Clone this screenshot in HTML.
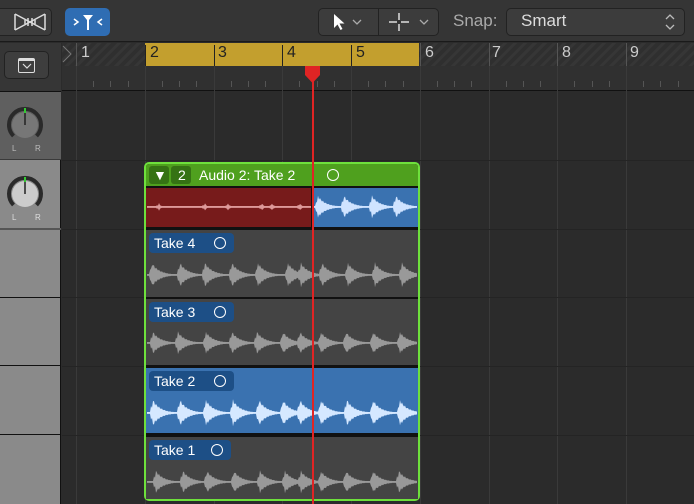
<!DOCTYPE html>
<html><head><meta charset="utf-8"><style>
*{margin:0;padding:0;box-sizing:border-box}
body{width:694px;height:504px;overflow:hidden;background:#2b2b2b;font-family:"Liberation Sans",sans-serif;position:relative}
.a{position:absolute}
.btn{position:absolute;border:1px solid #222;border-radius:5px;background:#3c3c3c}
.lab{position:absolute;left:3px;height:20px;border-radius:4px;background:#1d4f86;color:#fff;font-size:14px;line-height:20px;padding-left:5px}
.circ{position:absolute;width:12px;height:12px;border:1.6px solid #fff;border-radius:50%;top:4px}
.num{position:absolute;top:44px;font-size:16px;color:#ccc}
</style></head><body>
<div class="a" style="left:0;top:0;width:694px;height:42px;background:#353535;border-bottom:1px solid #1a1a1a"></div>
<div class="btn" style="left:-6px;top:8px;width:58px;height:28px;"></div>
<svg class="a" style="left:14px;top:12px" width="32" height="20"><path d="M1 2 L31 18 M1 18 L31 2 M1 2V18 M31 2V18" stroke="#ddd" stroke-width="1.5" fill="none"/><path d="M11 8v4M14 6v8M18 6v8M21 8v4" stroke="#ddd" stroke-width="1.5"/></svg>
<div class="a" style="left:65px;top:8px;width:45px;height:28px;border-radius:5px;background:#2f6db3"></div>
<svg class="a" style="left:72px;top:12px" width="32" height="20"><path d="M2 7l4 3-4 3M30 7l-4 3 4 3" stroke="#fff" stroke-width="1.5" fill="none"/><path d="M11 3h10l-4 5v10h-2V8z" fill="#fff"/></svg>
<div class="btn" style="left:318px;top:8px;width:121px;height:28px"></div>
<div class="a" style="left:378px;top:8px;width:1px;height:28px;background:#222"></div>
<svg class="a" style="left:330px;top:12px" width="110" height="20"><path d="M4 2v14l3.5-3.5 3 5.5 2-1-3-5.5h5z" fill="#fff"/><path d="M23 8l4 4 4-4" stroke="#aaa" stroke-width="1.3" fill="none"/><path d="M69 1v18M59 10h20" stroke="#ddd" stroke-width="1.5"/><path d="M67 8h4v4h-4z" fill="#353535"/><path d="M90 8l4 4 4-4" stroke="#aaa" stroke-width="1.3" fill="none"/></svg>
<div class="a" style="left:453px;top:11px;font-size:17px;color:#aaa">Snap:</div>
<div class="btn" style="left:506px;top:8px;width:179px;height:28px"></div>
<div class="a" style="left:521px;top:11px;font-size:17px;color:#ddd">Smart</div>
<svg class="a" style="left:664px;top:13px" width="12" height="18"><path d="M2 6l4-4 4 4M2 12l4 4 4-4" stroke="#bbb" stroke-width="1.3" fill="none"/></svg>
<div class="a" style="left:0;top:43px;width:61px;height:461px;background:#8a8a8a;border-right:1px solid #111"></div>
<div class="a" style="left:0;top:43px;width:61px;height:49px;background:#363636;border-bottom:1px solid #111"></div>
<div class="btn" style="left:4px;top:51px;width:45px;height:28px;background:#3e3e3e"></div>
<div class="a" style="left:18px;top:58px;width:17px;height:15px;border:1.5px solid #ddd;border-top-width:3px;border-radius:2px"></div>
<svg class="a" style="left:22px;top:63px" width="10" height="6"><path d="M1 1l4 4 4-4" stroke="#ddd" stroke-width="1.2" fill="none"/></svg>
<div class="a" style="left:0;top:92px;width:61px;height:68px;background:#5f5f5f;border-bottom:1px solid #3a3a3a"></div>
<div class="a" style="left:0;top:228px;width:61px;height:2px;background:#555"></div>
<div class="a" style="left:0;top:297px;width:61px;height:1px;background:#111"></div>
<div class="a" style="left:0;top:365px;width:61px;height:1px;background:#111"></div>
<div class="a" style="left:0;top:434px;width:61px;height:1px;background:#111"></div>
<svg class="a" style="left:3px;top:105px" width="44" height="50"><path d="M10.5 31 A16 16 0 1 1 33.5 31" stroke="#2a2a2a" stroke-width="4" fill="none"/><circle cx="22" cy="20" r="13" fill="#777"/><path d="M22 3v5" stroke="#3c3" stroke-width="2"/><path d="M22 8v12" stroke="#222" stroke-width="1.5"/><text x="9" y="46" font-size="8" fill="#bbb" font-family="Liberation Sans">L</text><text x="32" y="46" font-size="8" fill="#bbb" font-family="Liberation Sans">R</text></svg>
<svg class="a" style="left:3px;top:174px" width="44" height="50"><path d="M10.5 31 A16 16 0 1 1 33.5 31" stroke="#2a2a2a" stroke-width="4" fill="none"/><circle cx="22" cy="20" r="13" fill="#ccc"/><path d="M22 3v5" stroke="#3c3" stroke-width="2"/><path d="M22 8v12" stroke="#222" stroke-width="1.5"/><text x="9" y="46" font-size="8" fill="#ddd" font-family="Liberation Sans">L</text><text x="32" y="46" font-size="8" fill="#ddd" font-family="Liberation Sans">R</text></svg>
<div class="a" style="left:62px;top:43px;width:632px;height:23px;background:repeating-linear-gradient(135deg,#2f2f2f 0 4px,#363636 4px 7px)"></div>
<div class="a" style="left:145px;top:43px;width:274px;height:23px;background:#c39f2e"></div>
<div class="a" style="left:62px;top:66px;width:632px;height:25px;background:#303030;border-bottom:1px solid #111"></div>
<svg class="a" style="left:62px;top:43px" width="10" height="24"><path d="M1 3l8 8-8 8" stroke="#777" fill="none"/></svg>
<div id="ticks"></div>
<div class="num" style="left:81px">1</div><div class="num" style="left:150px;color:#222">2</div><div class="num" style="left:218px;color:#222">3</div><div class="num" style="left:287px;color:#222">4</div><div class="num" style="left:356px;color:#222">5</div><div class="num" style="left:425px">6</div><div class="num" style="left:492px">7</div><div class="num" style="left:562px">8</div><div class="num" style="left:630px">9</div>
<div class="a" style="left:62px;top:160px;width:632px;height:1px;background:#242424"></div>
<div class="a" style="left:62px;top:229px;width:632px;height:1px;background:#242424"></div>
<div class="a" style="left:62px;top:297px;width:632px;height:1px;background:#242424"></div>
<div class="a" style="left:62px;top:366px;width:632px;height:1px;background:#242424"></div>
<div class="a" style="left:62px;top:435px;width:632px;height:1px;background:#242424"></div>
<div class="a" style="left:144px;top:162px;width:276px;height:339px;border:2px solid #6ee03c;border-radius:5px;background:#111"></div>
<div class="a" style="left:146px;top:164px;width:272px;height:22px;background:#4fa01e;border-radius:3px 3px 0 0"></div>
<div class="a" style="left:149px;top:166px;width:20px;height:18px;background:#357214;border-radius:3px"></div>
<div class="a" style="left:171px;top:166px;width:20px;height:18px;background:#357214;border-radius:3px"></div>
<div class="a" style="left:153px;top:166px;font-size:14px;color:#fff;line-height:18px">▼</div>
<div class="a" style="left:178px;top:166px;font-size:14px;color:#fff;line-height:18px">2</div>
<div class="a" style="left:199px;top:166px;font-size:14px;color:#fff;line-height:18px">Audio 2: Take 2</div>
<div class="circ" style="left:327px;top:169px;border-color:#fff"></div>
<div class="a" style="left:146px;top:188px;width:165px;height:39px;background:#771b1b"></div>
<div class="a" style="left:313px;top:188px;width:105px;height:39px;background:#3a72b0"></div>
<div class="a" style="left:146px;top:230px;width:272px;height:67px;background:#444"></div>
<div class="a" style="left:146px;top:299px;width:272px;height:66px;background:#444"></div>
<div class="a" style="left:146px;top:368px;width:272px;height:65px;background:#3a72b0"></div>
<div class="a" style="left:146px;top:437px;width:272px;height:62px;background:#444"></div>
<div class="lab" style="left:149px;top:233px;width:85px">Take 4<div class="circ" style="left:65px"></div></div>
<div class="lab" style="left:149px;top:302px;width:85px">Take 3<div class="circ" style="left:65px"></div></div>
<div class="lab" style="left:149px;top:371px;width:85px">Take 2<div class="circ" style="left:65px"></div></div>
<div class="lab" style="left:149px;top:440px;width:82px">Take 1<div class="circ" style="left:62px"></div></div>
<svg id="wav" class="a" style="left:0;top:0" width="694" height="504"></svg>
<div class="a" style="left:312px;top:66px;width:1.5px;height:438px;background:#e02424"></div>
<svg class="a" style="left:304px;top:66px" width="17" height="18"><path d="M1 0h15v9l-7.5 8L1 9z" fill="#e02424"/></svg>
<script>
var t='';for(var b=0;b<9;b++){var x0=76+b*68.75;t+='<div class="a" style="left:'+x0+'px;top:'+(b>0&&b<5?45:43)+'px;width:1px;height:'+(b>0&&b<5?21:23)+'px;background:'+(b>0&&b<5?'#222':'#555')+'"></div>';t+='<div class="a" style="left:'+x0+'px;top:66px;width:1px;height:438px;background:#3a3a3a"></div>';for(var k=1;k<4;k++)t+='<div class="a" style="left:'+(x0+k*17.2)+'px;top:81px;width:1px;height:6px;background:#555"></div>';}
document.getElementById('ticks').innerHTML=t;
function wave(y,x1,x2,col,pts,amp,dec){var top=[],bot=[];for(var x=x1;x<=x2;x+=1){var a=1;for(var i=0;i<pts.length;i++){var dx=x-pts[i];if(dx>=-2&&dx<dec*4){var v=dx<0?amp*0.5:amp*Math.exp(-dx/dec);v*=(0.85+0.15*Math.sin(x*2.3));a=Math.max(a,v);}}top.push(x+','+(y-a).toFixed(1));bot.unshift(x+','+(y+a*0.95).toFixed(1));}
return '<polygon points="'+top.concat(bot).join(' ')+'" fill="'+col+'"/>';}
var s='';
s+=wave(207,147,311,'#d99',[159,205,228,262,272,300],4,2);
s+=wave(207,313,417,'#cfe3ff',[318,344,372,396],12,8);
s+=wave(275,147,417,'#999',[152,180,205,232,258,288,301,322,348,375,402],13,8);
s+=wave(343,147,417,'#999',[153,178,206,232,257,283,300,321,346,373,400],12,8);
s+=wave(413,147,417,'#d5e8ff',[153,180,206,233,259,283,300,321,347,373,400],14,8);
s+=wave(482,147,417,'#999',[156,183,207,234,260,285,301,321,346,373,399],12,8);
document.getElementById('wav').innerHTML=s;
</script>
</body></html>
